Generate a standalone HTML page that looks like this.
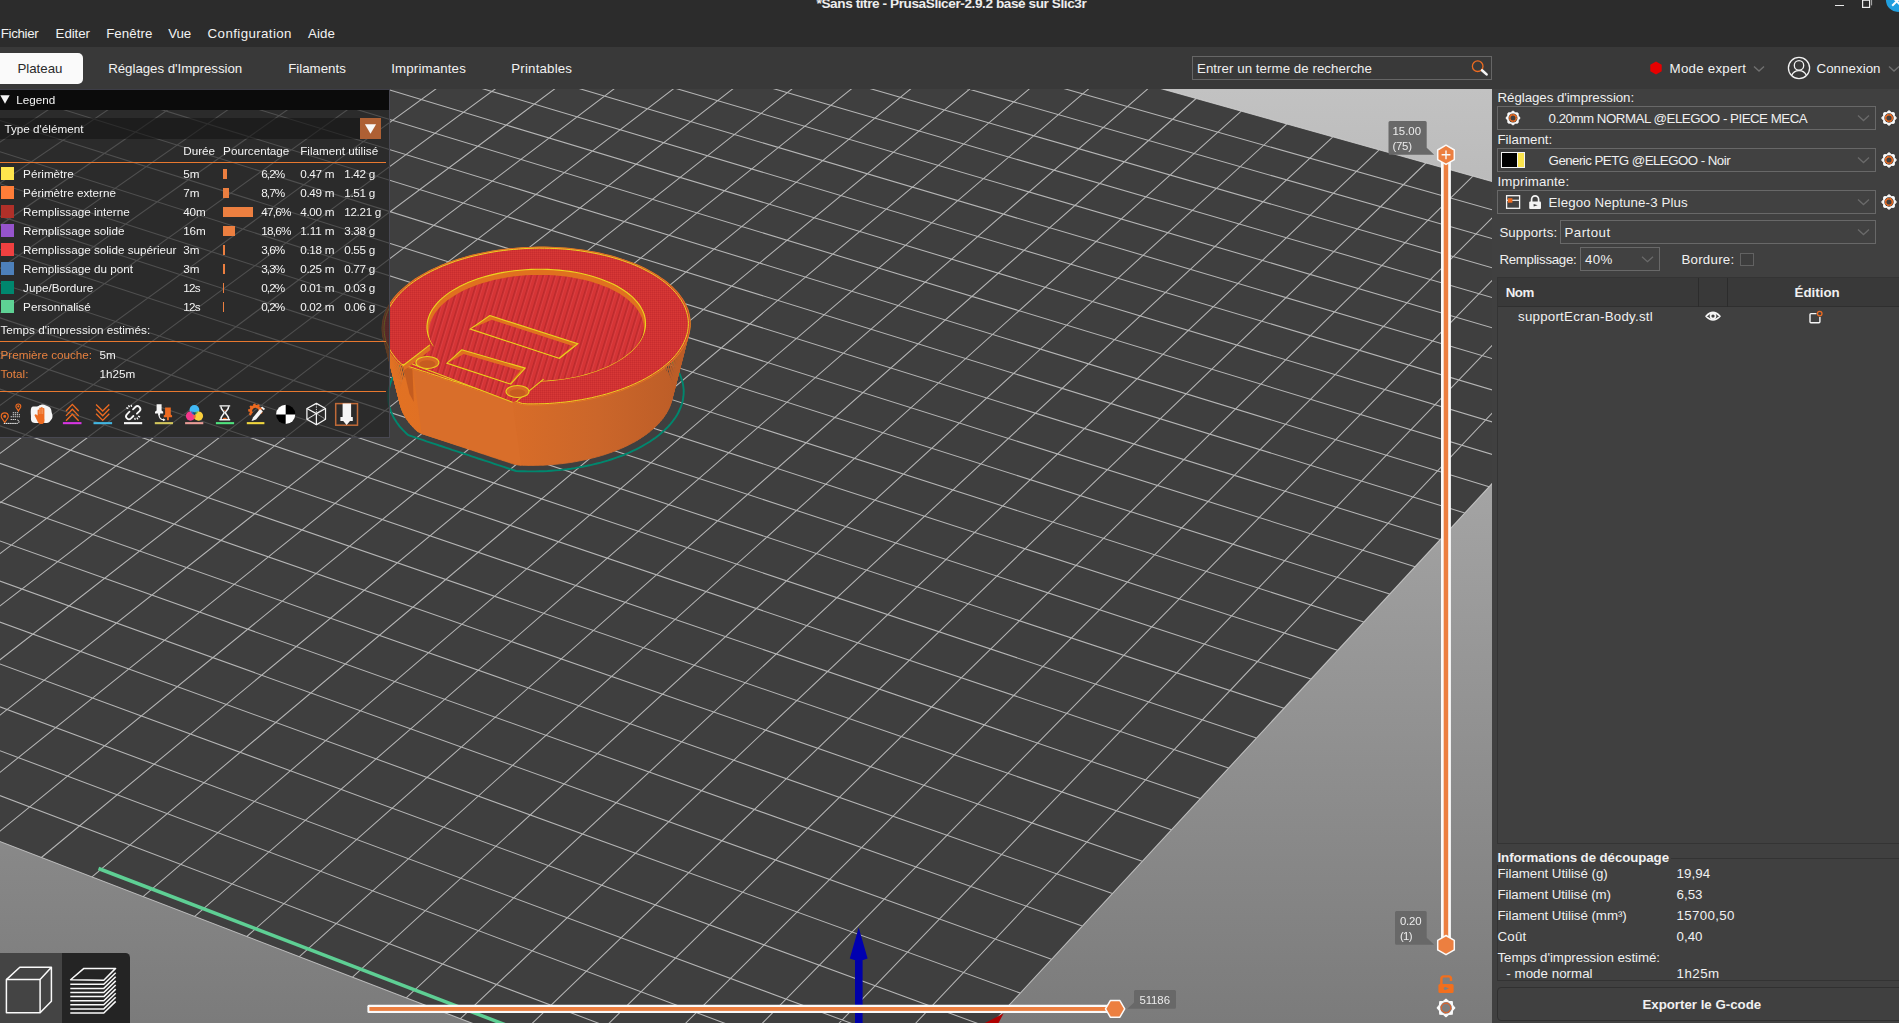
<!DOCTYPE html><html lang="fr"><head><meta charset="utf-8"><title>PrusaSlicer</title><style>
html,body{margin:0;padding:0}body{width:1899px;height:1023px;overflow:hidden;position:relative;background:#3b3b3b;font-family:"Liberation Sans","DejaVu Sans",sans-serif}
.t{position:absolute;white-space:pre;}
#gl{position:absolute;left:0;top:0;width:1492px;height:1023px;will-change:transform}
svg{overflow:visible}
</style></head><body>
<svg id="scene" width="1492" height="934" viewBox="0 89 1492 934" style="position:absolute;left:0;top:89px;overflow:hidden">
<defs><linearGradient id="bg" x1="0" y1="0" x2="0" y2="1"><stop offset="0" stop-color="#c2c2c2"/><stop offset="1" stop-color="#7b7b7b"/></linearGradient>
<linearGradient id="wall" x1="0" y1="0" x2="1" y2="0"><stop offset="0" stop-color="#e37222"/><stop offset="0.4" stop-color="#d96d28"/><stop offset="0.7" stop-color="#cb662a"/><stop offset="1" stop-color="#bb5c27"/></linearGradient>
<pattern id="hatch" width="5.6" height="6" patternUnits="userSpaceOnUse" patternTransform="rotate(17)"><rect width="5.6" height="6" fill="#d53435"/><rect width="1.7" height="6" fill="#bb2a2c"/><rect x="1.7" width="0.9" height="6" fill="#dd4245"/></pattern>
<pattern id="fine" width="2" height="2" patternUnits="userSpaceOnUse"><rect width="2" height="2" fill="#d03232"/><rect width="1" height="1" fill="#bf2a2d"/><rect x="1" y="1" width="1" height="1" fill="#dc3e3b"/></pattern>
</defs>
<rect x="0" y="89" width="1492" height="934" fill="url(#bg)"/>
<polygon points="1714,243.9 321.2,-147.2 -749.5,553.1 855.7,1170.8" fill="#3f3f3f"/>
<path d="M1714 243.9L855.7 1170.8M1714 243.9L321.2 -147.2M1665 230.2L797.4 1148.4M1692.9 266.7L294.1 -129.5M1616.4 216.5L739.8 1126.2M1671.5 289.8L266.6 -111.5M1568.2 203L682.8 1104.2M1649.8 313.2L238.8 -93.3M1520.4 189.6L626.3 1082.5M1627.8 336.9L210.7 -74.9M1472.9 176.2L570.5 1061M1605.5 361L182.2 -56.3M1425.9 163L515.2 1039.7M1582.9 385.4L153.3 -37.4M1379.2 149.9L460.4 1018.7M1560 410.2L124.1 -18.3M1332.9 136.9L406.2 997.8M1536.7 435.3L94.5 1.1M1286.9 124L352.5 977.2M1513.1 460.8L64.5 20.7M1241.3 111.2L299.4 956.7M1489.1 486.7L34.1 40.6M1196.1 98.5L246.8 936.5M1464.8 513L3.4 60.7M1151.2 85.9L194.7 916.4M1440.1 539.6L-27.8 81.1M1106.7 73.4L143.1 896.6M1415.1 566.7L-59.4 101.7M1062.5 61L92 876.9M1389.7 594.1L-91.4 122.7M1018.6 48.6L41.4 857.5M1363.8 622L-123.8 143.9M975.1 36.4L-8.7 838.2M1337.6 650.3L-156.7 165.3M931.9 24.3L-58.3 819.1M1311 679.1L-190 187.1M889 12.2L-107.5 800.2M1284 708.3L-223.7 209.2M846.5 0.3L-156.1 781.4M1256.5 737.9L-257.9 231.6M804.2 -11.6L-204.4 762.9M1228.6 768L-292.6 254.3M762.3 -23.3L-252.1 744.5M1200.3 798.6L-327.8 277.3M720.7 -35L-299.5 726.3M1171.5 829.7L-363.4 300.6M679.4 -46.6L-346.4 708.2M1142.2 861.3L-399.6 324.2M638.5 -58.1L-392.8 690.4M1112.4 893.5L-436.3 348.2M597.8 -69.5L-438.8 672.7M1082.2 926.1L-473.5 372.6M557.4 -80.9L-484.5 655.1M1051.5 959.3L-511.2 397.2M517.3 -92.1L-529.6 637.7M1020.2 993.1L-549.5 422.3M477.5 -103.3L-574.4 620.5M988.4 1027.4L-588.3 447.7M438 -114.4L-618.8 603.4M956.1 1062.3L-627.7 473.5M398.8 -125.4L-662.8 586.5M923.2 1097.9L-667.7 499.6M359.9 -136.4L-706.3 569.7M889.7 1134L-708.3 526.2M321.2 -147.2L-749.5 553.1M855.7 1170.8L-749.5 553.1" stroke="#d6d6d6" stroke-opacity="0.78" stroke-width="1.05" fill="none"/>
<line x1="98.5" y1="868.5" x2="520" y2="1030.4" stroke="#5ecf94" stroke-width="3.5"/>
<polygon points="413.8,352.9 411.7,354.6 409.7,356.3 407.7,358.1 405.9,359.8 404.1,361.6 402.4,363.5 400.8,365.3 399.3,367.2 397.9,369.1 396.6,371 395.4,372.9 394.2,374.8 393.2,376.8 392.2,378.7 391.4,380.7 390.6,382.7 390,384.7 389.5,386.7 389,388.7 388.7,390.7 388.4,392.7 388.3,394.8 388.2,396.8 388.3,398.8 388.4,400.8 388.7,402.8 389,404.9 389.5,406.9 390.1,408.9 390.7,410.8 391.5,412.8 392.4,414.8 393.3,416.7 394.4,418.7 395.6,420.6 396.8,422.5 398.2,424.4 399.6,426.3 401.2,428.1 402.8,429.9 404.6,431.7 406.4,433.5 408.4,435.2 411.3,436.2 414.3,437.2 417.3,438.2 420.4,439.2 423.4,440.2 426.5,441.3 429.7,442.3 432.8,443.3 436,444.4 439.2,445.5 442.4,446.5 445.6,447.6 448.9,448.7 452.1,449.8 455.4,450.8 458.6,451.9 461.9,453 465.2,454.1 468.5,455.2 471.7,456.3 475,457.4 478.2,458.5 481.5,459.5 484.7,460.6 488,461.7 491.2,462.7 494.3,463.8 497.5,464.9 500.7,465.9 503.8,466.9 506.9,468 509.9,469 513,470 516,471 519.9,471.2 523.8,471.3 527.8,471.4 531.7,471.4 535.7,471.4 539.6,471.3 543.6,471.2 547.5,471 551.4,470.7 555.4,470.4 559.3,470.1 563.2,469.6 567.1,469.2 570.9,468.7 574.7,468.1 578.5,467.4 582.3,466.8 586,466 589.7,465.3 593.4,464.4 597,463.5 600.6,462.6 604.1,461.6 607.6,460.6 611,459.5 614.3,458.4 617.7,457.2 620.9,456 624.1,454.8 627.2,453.5 630.3,452.1 633.3,450.7 636.2,449.3 639,447.9 641.8,446.4 644.5,444.8 647.1,443.3 649.7,441.7 652.1,440 654.5,438.4 656.8,436.7 659,435 661.1,433.2 663.2,431.4 665.1,429.6 667,427.8 668.7,426 670.4,424.1 672,422.2 673.4,420.3 674.8,418.4 676.1,416.4 677.3,414.5 678.4,412.5 679.3,410.5 680.2,408.5 681,406.5 681.7,404.5 682.3,402.5 682.8,400.5 683.1,398.5 683.4,396.5 683.6,394.5 683.7,392.4 683.7,390.4 683.5,388.4 683.3,386.4 683,384.4 682.6,382.4 682,380.4 681.4,378.5 680.7,376.5 679.9,374.5 678.9,372.6 677.9,370.7 676.8,368.8 675.6,366.9 674.3,365 672.9,363.2 671.4,361.4 669.9,359.6 668.2,357.8 666.5,356.1 664.6,354.3 662.7,352.7 660.7,351 658.6,349.4 656.4,347.7 654.2,346.2 651.9,344.6 649.5,343.1 647,341.7 644.5,340.2 641.8,338.8 639.1,337.5 636.4,336.1 633.6,334.9 630.7,333.6 627.7,332.4 624.7,331.2 621.7,330.1 618.5,329 615.4,328 612.1,327 608.9,326.1 605.5,325.2 602.2,324.3 598.8,323.5 595.3,322.7 591.8,322 588.3,321.4 584.8,320.7 581.2,320.2 577.5,319.7 573.9,319.2 570.2,318.8 566.5,318.4 562.8,318.1 559.1,317.8 555.4,317.6 551.6,317.4 547.8,317.3 544.1,317.2 540.3,317.2 536.5,317.2 532.7,317.3 528.9,317.4 525.2,317.6 521.4,317.8 517.6,318.1 513.9,318.4 510.1,318.8 506.4,319.2 502.7,319.7 499,320.2 495.4,320.8 491.8,321.4 488.2,322.1 484.6,322.8 481.1,323.6 477.6,324.4 474.1,325.3 470.7,326.2 467.3,327.1 464,328.1 460.7,329.2 457.4,330.3 454.2,331.4 451.1,332.6 448,333.8 445,335 442,336.3 439.1,337.6 436.3,339 433.5,340.4 430.8,341.9 428.1,343.3 425.6,344.8 423.1,346.4 420.6,348 418.3,349.6 416,351.2 413.8,352.9" fill="none" stroke="#00876e" stroke-width="1.9"/>
<path d="M409.1 283.7L406.2 286L420.3 357.9L422.9 355.8ZM406.2 286L403.4 288.4L417.9 360.1L420.3 357.9ZM403.4 288.4L400.8 290.8L415.6 362.3L417.9 360.1ZM400.8 290.8L398.3 293.3L413.4 364.5L415.6 362.3ZM398.3 293.3L396.1 295.8L411.4 366.8L413.4 364.5ZM396.1 295.8L393.9 298.3L409.5 369.1L411.4 366.8ZM393.9 298.3L392 300.9L407.8 371.4L409.5 369.1ZM392 300.9L390.2 303.5L406.3 373.8L407.8 371.4ZM390.2 303.5L388.6 306.1L404.8 376.2L406.3 373.8ZM388.6 306.1L387.2 308.8L403.6 378.6L404.8 376.2ZM387.2 308.8L386 311.4L402.5 381L403.6 378.6ZM386 311.4L384.9 314.1L401.6 383.5L402.5 381ZM384.9 314.1L384 316.9L400.8 385.9L401.6 383.5ZM384 316.9L383.3 319.6L400.2 388.4L400.8 385.9ZM383.3 319.6L382.8 322.3L399.7 390.9L400.2 388.4ZM382.8 322.3L382.5 325.1L399.5 393.4L399.7 390.9ZM382.5 325.1L382.3 327.8L399.3 395.9L399.5 393.4ZM382.3 327.8L382.4 330.6L399.4 398.3L399.3 395.9ZM382.4 330.6L382.6 333.3L399.6 400.8L399.4 398.3ZM382.6 333.3L383 336.1L400 403.3L399.6 400.8ZM383 336.1L383.7 338.8L400.6 405.8L400 403.3ZM383.7 338.8L384.5 341.5L401.3 408.2L400.6 405.8ZM384.5 341.5L385.4 344.2L402.2 410.7L401.3 408.2ZM385.4 344.2L386.6 346.9L403.2 413.1L402.2 410.7ZM386.6 346.9L388 349.6L404.5 415.5L403.2 413.1ZM388 349.6L389.5 352.2L405.8 417.9L404.5 415.5ZM389.5 352.2L391.3 354.8L407.4 420.2L405.8 417.9ZM391.3 354.8L393.2 357.3L409.1 422.6L407.4 420.2ZM393.2 357.3L395.3 359.9L410.9 424.8L409.1 422.6ZM395.3 359.9L397.5 362.4L413 427.1L410.9 424.8ZM397.5 362.4L400.1 364.7L415.1 429.3L413 427.1ZM400.1 364.7L404.1 366L417.5 431.5L415.1 429.3ZM404.1 366L408.2 367.4L420.5 433.1L417.5 431.5ZM408.2 367.4L412.3 368.7L424.2 434.4L420.5 433.1ZM412.3 368.7L416.5 370.1L427.9 435.6L424.2 434.4ZM416.5 370.1L420.8 371.5L431.7 436.9L427.9 435.6ZM420.8 371.5L425.1 372.9L435.5 438.1L431.7 436.9ZM425.1 372.9L429.4 374.3L439.4 439.4L435.5 438.1ZM429.4 374.3L433.8 375.7L443.3 440.7L439.4 439.4ZM433.8 375.7L438.3 377.2L447.2 442L443.3 440.7ZM438.3 377.2L442.8 378.6L451.2 443.3L447.2 442ZM442.8 378.6L447.3 380.1L455.2 444.7L451.2 443.3ZM447.3 380.1L451.8 381.6L459.2 446L455.2 444.7ZM451.8 381.6L456.3 383.1L463.2 447.3L459.2 446ZM456.3 383.1L460.8 384.5L467.3 448.7L463.2 447.3ZM460.8 384.5L465.4 386L471.3 450L467.3 448.7ZM465.4 386L469.9 387.5L475.3 451.3L471.3 450ZM469.9 387.5L474.5 389L479.3 452.7L475.3 451.3ZM474.5 389L479 390.5L483.3 454L479.3 452.7ZM479 390.5L483.5 391.9L487.3 455.3L483.3 454ZM483.5 391.9L488 393.4L491.3 456.7L487.3 455.3ZM488 393.4L492.4 394.8L495.3 458L491.3 456.7ZM492.4 394.8L496.8 396.3L499.2 459.3L495.3 458ZM496.8 396.3L501.2 397.7L503.1 460.6L499.2 459.3ZM501.2 397.7L505.5 399.1L506.9 461.8L503.1 460.6ZM505.5 399.1L509.8 400.5L510.7 463.1L506.9 461.8ZM509.8 400.5L514 401.9L514.4 464.3L510.7 463.1ZM514 401.9L518.2 403.3L518.7 465.1L514.4 464.3ZM518.2 403.3L522.3 404.6L523.5 465.3L518.7 465.1ZM522.3 404.6L527.7 404.8L528.4 465.4L523.5 465.3ZM527.7 404.8L533.2 404.8L533.3 465.4L528.4 465.4ZM533.2 404.8L538.6 404.7L538.1 465.3L533.3 465.4ZM538.6 404.7L544.1 404.6L543 465.2L538.1 465.3ZM544.1 404.6L549.6 404.3L547.8 464.9L543 465.2ZM549.6 404.3L555.1 403.9L552.7 464.6L547.8 464.9ZM555.1 403.9L560.5 403.4L557.5 464.1L552.7 464.6ZM560.5 403.4L565.9 402.8L562.3 463.6L557.5 464.1ZM565.9 402.8L571.3 402.2L567 463L562.3 463.6ZM571.3 402.2L576.6 401.4L571.8 462.3L567 463ZM576.6 401.4L581.9 400.5L576.4 461.5L571.8 462.3ZM581.9 400.5L587.1 399.6L581 460.6L576.4 461.5ZM587.1 399.6L592.2 398.5L585.6 459.7L581 460.6ZM592.2 398.5L597.3 397.4L590.1 458.6L585.6 459.7ZM597.3 397.4L602.3 396.1L594.5 457.5L590.1 458.6ZM602.3 396.1L607.2 394.8L598.9 456.3L594.5 457.5ZM607.2 394.8L612 393.4L603.1 455.1L598.9 456.3ZM612 393.4L616.7 391.9L607.3 453.7L603.1 455.1ZM616.7 391.9L621.4 390.3L611.4 452.3L607.3 453.7ZM621.4 390.3L625.9 388.6L615.4 450.8L611.4 452.3ZM625.9 388.6L630.2 386.9L619.3 449.2L615.4 450.8ZM630.2 386.9L634.5 385.1L623.1 447.6L619.3 449.2ZM634.5 385.1L638.7 383.2L626.8 445.9L623.1 447.6ZM638.7 383.2L642.7 381.2L630.3 444.1L626.8 445.9ZM642.7 381.2L646.5 379.2L633.8 442.3L630.3 444.1ZM646.5 379.2L650.3 377.1L637.1 440.4L633.8 442.3ZM650.3 377.1L653.8 375L640.3 438.4L637.1 440.4ZM653.8 375L657.3 372.7L643.3 436.4L640.3 438.4ZM657.3 372.7L660.6 370.5L646.2 434.4L643.3 436.4ZM660.6 370.5L663.7 368.1L649 432.3L646.2 434.4ZM663.7 368.1L666.6 365.8L651.6 430.1L649 432.3ZM666.6 365.8L669.4 363.3L654.1 427.9L651.6 430.1ZM669.4 363.3L672.1 360.9L656.5 425.7L654.1 427.9ZM672.1 360.9L674.5 358.3L658.7 423.4L656.5 425.7ZM674.5 358.3L676.8 355.8L660.7 421.1L658.7 423.4ZM676.8 355.8L678.9 353.2L662.6 418.8L660.7 421.1ZM678.9 353.2L680.9 350.6L664.3 416.4L662.6 418.8ZM680.9 350.6L682.6 348L665.9 414L664.3 416.4ZM682.6 348L684.2 345.3L667.3 411.6L665.9 414ZM684.2 345.3L685.6 342.6L668.5 409.2L667.3 411.6ZM685.6 342.6L686.8 339.9L669.6 406.7L668.5 409.2ZM686.8 339.9L687.8 337.2L670.5 404.3L669.6 406.7ZM687.8 337.2L688.6 334.4L671.3 401.8L670.5 404.3ZM688.6 334.4L689.3 331.7L671.8 399.3L671.3 401.8ZM689.3 331.7L689.7 328.9L672.3 396.8L671.8 399.3ZM689.7 328.9L690 326.2L672.5 394.3L672.3 396.8ZM690 326.2L690.1 323.4L672.6 391.8L672.5 394.3ZM690.1 323.4L689.9 320.7L672.5 389.3L672.6 391.8ZM689.9 320.7L689.6 318L672.3 386.9L672.5 389.3ZM689.6 318L689.2 315.2L671.8 384.4L672.3 386.9ZM689.2 315.2L688.5 312.5L671.3 382L671.8 384.4ZM688.5 312.5L687.7 309.8L670.5 379.5L671.3 382ZM687.7 309.8L686.6 307.2L669.6 377.1L670.5 379.5ZM686.6 307.2L685.4 304.5L668.6 374.7L669.6 377.1ZM685.4 304.5L684 301.9L667.3 372.3L668.6 374.7ZM684 301.9L682.5 299.3L665.9 370L667.3 372.3ZM682.5 299.3L680.7 296.8L664.4 367.7L665.9 370ZM680.7 296.8L678.8 294.3L662.7 365.4L664.4 367.7ZM678.8 294.3L676.7 291.8L660.9 363.2L662.7 365.4ZM676.7 291.8L674.5 289.4L658.9 361L660.9 363.2ZM674.5 289.4L672.1 287L656.8 358.8L658.9 361ZM672.1 287L669.5 284.7L654.5 356.7L656.8 358.8ZM669.5 284.7L666.8 282.4L652.1 354.6L654.5 356.7ZM666.8 282.4L663.9 280.1L649.5 352.6L652.1 354.6ZM663.9 280.1L660.8 278L646.8 350.6L649.5 352.6ZM660.8 278L657.7 275.9L644 348.7L646.8 350.6ZM657.7 275.9L654.4 273.8L641.1 346.8L644 348.7ZM654.4 273.8L650.9 271.8L638 345L641.1 346.8ZM650.9 271.8L647.3 269.9L634.8 343.2L638 345ZM647.3 269.9L643.6 268L631.5 341.5L634.8 343.2ZM643.6 268L639.8 266.2L628.1 339.9L631.5 341.5ZM639.8 266.2L635.8 264.5L624.6 338.4L628.1 339.9ZM635.8 264.5L631.7 262.9L621 336.9L624.6 338.4ZM631.7 262.9L627.5 261.3L617.2 335.4L621 336.9ZM627.5 261.3L623.2 259.8L613.4 334.1L617.2 335.4ZM623.2 259.8L618.8 258.4L609.5 332.8L613.4 334.1ZM618.8 258.4L614.4 257L605.5 331.6L609.5 332.8ZM614.4 257L609.8 255.8L601.5 330.4L605.5 331.6ZM609.8 255.8L605.1 254.6L597.3 329.4L601.5 330.4ZM605.1 254.6L600.4 253.5L593.1 328.4L597.3 329.4ZM600.4 253.5L595.6 252.5L588.8 327.5L593.1 328.4ZM595.6 252.5L590.7 251.6L584.5 326.6L588.8 327.5ZM590.7 251.6L585.7 250.8L580.1 325.9L584.5 326.6ZM585.7 250.8L580.7 250L575.6 325.2L580.1 325.9ZM580.7 250L575.7 249.4L571.1 324.6L575.6 325.2ZM575.7 249.4L570.6 248.8L566.6 324.1L571.1 324.6ZM570.6 248.8L565.5 248.3L562 323.6L566.6 324.1ZM565.5 248.3L560.3 247.9L557.4 323.3L562 323.6ZM560.3 247.9L555.1 247.7L552.8 323L557.4 323.3ZM555.1 247.7L549.9 247.4L548.1 322.8L552.8 323ZM549.9 247.4L544.6 247.3L543.5 322.7L548.1 322.8ZM544.6 247.3L539.4 247.3L538.8 322.7L543.5 322.7ZM539.4 247.3L534.1 247.4L534.1 322.8L538.8 322.7ZM534.1 247.4L528.9 247.6L529.5 322.9L534.1 322.8ZM528.9 247.6L523.7 247.8L524.8 323.2L529.5 322.9ZM523.7 247.8L518.4 248.2L520.1 323.5L524.8 323.2ZM518.4 248.2L513.2 248.6L515.5 323.9L520.1 323.5ZM513.2 248.6L508.1 249.1L510.9 324.4L515.5 323.9ZM508.1 249.1L502.9 249.7L506.3 324.9L510.9 324.4ZM502.9 249.7L497.8 250.4L501.8 325.6L506.3 324.9ZM497.8 250.4L492.7 251.2L497.3 326.3L501.8 325.6ZM492.7 251.2L487.7 252.1L492.8 327.1L497.3 326.3ZM487.7 252.1L482.8 253.1L488.4 328L492.8 327.1ZM482.8 253.1L477.9 254.1L484 329L488.4 328ZM477.9 254.1L473 255.3L479.7 330L484 329ZM473 255.3L468.3 256.5L475.5 331.1L479.7 330ZM468.3 256.5L463.6 257.8L471.3 332.3L475.5 331.1ZM463.6 257.8L459 259.2L467.2 333.5L471.3 332.3ZM459 259.2L454.5 260.7L463.2 334.9L467.2 333.5ZM454.5 260.7L450.1 262.2L459.3 336.3L463.2 334.9ZM450.1 262.2L445.7 263.8L455.5 337.8L459.3 336.3ZM445.7 263.8L441.5 265.5L451.7 339.3L455.5 337.8ZM441.5 265.5L437.4 267.3L448.1 340.9L451.7 339.3ZM437.4 267.3L433.4 269.1L444.5 342.6L448.1 340.9ZM433.4 269.1L429.6 271L441.1 344.3L444.5 342.6ZM429.6 271L425.8 273L437.8 346.1L441.1 344.3ZM425.8 273L422.2 275L434.6 347.9L437.8 346.1ZM422.2 275L418.7 277.1L431.5 349.8L434.6 347.9ZM418.7 277.1L415.3 279.2L428.5 351.8L431.5 349.8ZM415.3 279.2L412.1 281.5L425.6 353.8L428.5 351.8ZM412.1 281.5L409.1 283.7L422.9 355.8L425.6 353.8Z" fill="url(#wall)" stroke="url(#wall)" stroke-width="0.8"/>
<polygon points="412.2,364.1 512.5,402.2 521.3,465.8 421.6,433.9" fill="#d96e2a"/>
<polygon points="402.8,365.8 412.2,364.1 413.8,402 409.5,394" fill="#c45c1f"/>
<polygon points="409.1,283.7 406.2,286 403.4,288.4 400.8,290.8 398.3,293.3 396.1,295.8 393.9,298.3 392,300.9 390.2,303.5 388.6,306.1 387.2,308.8 386,311.4 384.9,314.1 384,316.9 383.3,319.6 382.8,322.3 382.5,325.1 382.3,327.8 382.4,330.6 382.6,333.3 383,336.1 383.7,338.8 384.5,341.5 385.4,344.2 386.6,346.9 388,349.6 389.5,352.2 391.3,354.8 393.2,357.3 395.3,359.9 397.5,362.4 400.1,364.7 404.1,366 408.2,367.4 412.3,368.7 416.5,370.1 420.8,371.5 425.1,372.9 429.4,374.3 433.8,375.7 438.3,377.2 442.8,378.6 447.3,380.1 451.8,381.6 456.3,383.1 460.8,384.5 465.4,386 469.9,387.5 474.5,389 479,390.5 483.5,391.9 488,393.4 492.4,394.8 496.8,396.3 501.2,397.7 505.5,399.1 509.8,400.5 514,401.9 518.2,403.3 522.3,404.6 527.7,404.8 533.2,404.8 538.6,404.7 544.1,404.6 549.6,404.3 555.1,403.9 560.5,403.4 565.9,402.8 571.3,402.2 576.6,401.4 581.9,400.5 587.1,399.6 592.2,398.5 597.3,397.4 602.3,396.1 607.2,394.8 612,393.4 616.7,391.9 621.4,390.3 625.9,388.6 630.2,386.9 634.5,385.1 638.7,383.2 642.7,381.2 646.5,379.2 650.3,377.1 653.8,375 657.3,372.7 660.6,370.5 663.7,368.1 666.6,365.8 669.4,363.3 672.1,360.9 674.5,358.3 676.8,355.8 678.9,353.2 680.9,350.6 682.6,348 684.2,345.3 685.6,342.6 686.8,339.9 687.8,337.2 688.6,334.4 689.3,331.7 689.7,328.9 690,326.2 690.1,323.4 689.9,320.7 689.6,318 689.2,315.2 688.5,312.5 687.7,309.8 686.6,307.2 685.4,304.5 684,301.9 682.5,299.3 680.7,296.8 678.8,294.3 676.7,291.8 674.5,289.4 672.1,287 669.5,284.7 666.8,282.4 663.9,280.1 660.8,278 657.7,275.9 654.4,273.8 650.9,271.8 647.3,269.9 643.6,268 639.8,266.2 635.8,264.5 631.7,262.9 627.5,261.3 623.2,259.8 618.8,258.4 614.4,257 609.8,255.8 605.1,254.6 600.4,253.5 595.6,252.5 590.7,251.6 585.7,250.8 580.7,250 575.7,249.4 570.6,248.8 565.5,248.3 560.3,247.9 555.1,247.7 549.9,247.4 544.6,247.3 539.4,247.3 534.1,247.4 528.9,247.6 523.7,247.8 518.4,248.2 513.2,248.6 508.1,249.1 502.9,249.7 497.8,250.4 492.7,251.2 487.7,252.1 482.8,253.1 477.9,254.1 473,255.3 468.3,256.5 463.6,257.8 459,259.2 454.5,260.7 450.1,262.2 445.7,263.8 441.5,265.5 437.4,267.3 433.4,269.1 429.6,271 425.8,273 422.2,275 418.7,277.1 415.3,279.2 412.1,281.5 409.1,283.7" fill="#d23232" stroke="#e07e22" stroke-width="1.4"/>
<polygon points="409.1,283.7 406.2,286 403.4,288.4 400.8,290.8 398.3,293.3 396.1,295.8 393.9,298.3 392,300.9 390.2,303.5 388.6,306.1 387.2,308.8 386,311.4 384.9,314.1 384,316.9 383.3,319.6 382.8,322.3 382.5,325.1 382.3,327.8 382.4,330.6 382.6,333.3 383,336.1 383.7,338.8 384.5,341.5 385.4,344.2 386.6,346.9 388,349.6 389.5,352.2 391.3,354.8 393.2,357.3 395.3,359.9 397.5,362.4 400.1,364.7 404.1,366 408.2,367.4 412.3,368.7 416.5,370.1 420.8,371.5 425.1,372.9 429.4,374.3 433.8,375.7 438.3,377.2 442.8,378.6 447.3,380.1 451.8,381.6 456.3,383.1 460.8,384.5 465.4,386 469.9,387.5 474.5,389 479,390.5 483.5,391.9 488,393.4 492.4,394.8 496.8,396.3 501.2,397.7 505.5,399.1 509.8,400.5 514,401.9 518.2,403.3 522.3,404.6 527.7,404.8 533.2,404.8 538.6,404.7 544.1,404.6 549.6,404.3 555.1,403.9 560.5,403.4 565.9,402.8 571.3,402.2 576.6,401.4 581.9,400.5 587.1,399.6 592.2,398.5 597.3,397.4 602.3,396.1 607.2,394.8 612,393.4 616.7,391.9 621.4,390.3 625.9,388.6 630.2,386.9 634.5,385.1 638.7,383.2 642.7,381.2 646.5,379.2 650.3,377.1 653.8,375 657.3,372.7 660.6,370.5 663.7,368.1 666.6,365.8 669.4,363.3 672.1,360.9 674.5,358.3 676.8,355.8 678.9,353.2 680.9,350.6 682.6,348 684.2,345.3 685.6,342.6 686.8,339.9 687.8,337.2 688.6,334.4 689.3,331.7 689.7,328.9 690,326.2 690.1,323.4 689.9,320.7 689.6,318 689.2,315.2 688.5,312.5 687.7,309.8 686.6,307.2 685.4,304.5 684,301.9 682.5,299.3 680.7,296.8 678.8,294.3 676.7,291.8 674.5,289.4 672.1,287 669.5,284.7 666.8,282.4 663.9,280.1 660.8,278 657.7,275.9 654.4,273.8 650.9,271.8 647.3,269.9 643.6,268 639.8,266.2 635.8,264.5 631.7,262.9 627.5,261.3 623.2,259.8 618.8,258.4 614.4,257 609.8,255.8 605.1,254.6 600.4,253.5 595.6,252.5 590.7,251.6 585.7,250.8 580.7,250 575.7,249.4 570.6,248.8 565.5,248.3 560.3,247.9 555.1,247.7 549.9,247.4 544.6,247.3 539.4,247.3 534.1,247.4 528.9,247.6 523.7,247.8 518.4,248.2 513.2,248.6 508.1,249.1 502.9,249.7 497.8,250.4 492.7,251.2 487.7,252.1 482.8,253.1 477.9,254.1 473,255.3 468.3,256.5 463.6,257.8 459,259.2 454.5,260.7 450.1,262.2 445.7,263.8 441.5,265.5 437.4,267.3 433.4,269.1 429.6,271 425.8,273 422.2,275 418.7,277.1 415.3,279.2 412.1,281.5 409.1,283.7" fill="url(#fine)" opacity="0.6"/>
<polygon points="410.4,284.2 407.6,286.4 404.8,288.8 402.3,291.2 399.8,293.6 397.6,296.1 395.5,298.6 393.6,301.1 391.8,303.7 390.2,306.3 388.8,308.9 387.6,311.6 386.5,314.3 385.7,316.9 385,319.6 384.5,322.4 384.2,325.1 384,327.8 384.1,330.5 384.3,333.2 384.7,335.9 385.3,338.6 386.1,341.3 387.1,344 388.3,346.6 389.6,349.3 391.1,351.9 392.9,354.4 394.7,357 396.8,359.5 399.1,361.9 401.7,364.2 405.7,365.5 409.7,366.8 413.8,368.1 417.9,369.5 422.2,370.9 426.4,372.2 430.7,373.7 435.1,375.1 439.5,376.5 443.9,378 448.4,379.4 452.8,380.9 457.3,382.3 461.8,383.8 466.3,385.3 470.8,386.7 475.3,388.2 479.7,389.6 484.2,391.1 488.6,392.5 493,394 497.4,395.4 501.7,396.8 506,398.2 510.2,399.6 514.4,400.9 518.5,402.3 522.6,403.6 527.8,403.9 533.2,403.9 538.6,403.8 544.1,403.7 549.5,403.4 554.9,403 560.3,402.5 565.6,402 570.9,401.3 576.2,400.5 581.4,399.7 586.5,398.7 591.6,397.7 596.6,396.5 601.6,395.3 606.4,394 611.2,392.6 615.9,391.1 620.4,389.6 624.9,387.9 629.2,386.2 633.4,384.4 637.5,382.5 641.5,380.6 645.3,378.6 649,376.5 652.5,374.4 655.9,372.2 659.2,370 662.3,367.7 665.2,365.3 668,362.9 670.6,360.5 673,358 675.3,355.5 677.4,352.9 679.3,350.3 681,347.7 682.6,345.1 683.9,342.4 685.1,339.7 686.1,337 686.9,334.3 687.6,331.6 688,328.9 688.3,326.2 688.4,323.4 688.3,320.7 688,318 687.5,315.3 686.8,312.7 686,310 685,307.4 683.8,304.7 682.4,302.2 680.9,299.6 679.1,297.1 677.3,294.6 675.2,292.2 673,289.8 670.6,287.4 668,285.1 665.4,282.8 662.5,280.6 659.5,278.5 656.4,276.4 653.1,274.3 649.7,272.4 646.1,270.5 642.4,268.6 638.6,266.8 634.7,265.1 630.7,263.5 626.5,262 622.3,260.5 618,259.1 613.5,257.8 609,256.5 604.4,255.4 599.7,254.3 594.9,253.3 590.1,252.4 585.2,251.6 580.3,250.8 575.3,250.2 570.2,249.6 565.1,249.1 560,248.8 554.9,248.5 549.7,248.3 544.5,248.2 539.4,248.1 534.2,248.2 529,248.4 523.8,248.6 518.6,249 513.5,249.4 508.4,249.9 503.3,250.5 498.2,251.2 493.2,252 488.2,252.9 483.3,253.9 478.5,254.9 473.7,256 469,257.2 464.4,258.5 459.8,259.9 455.3,261.3 451,262.9 446.7,264.5 442.5,266.1 438.5,267.9 434.5,269.7 430.7,271.6 427,273.5 423.4,275.5 420,277.6 416.7,279.7 413.5,281.9 410.4,284.2" fill="none" stroke="#ecd41f" stroke-width="1"/>
<clipPath id="rimclip"><polygon points="445.6,295.4 442.6,297.9 439.8,300.4 437.2,303.1 435,305.8 433,308.5 431.3,311.3 429.8,314.2 428.7,317.1 427.8,320 427.3,322.9 427,325.8 427,328.7 427.4,331.7 428,334.6 429,337.5 430.2,340.3 431.7,343.1 433.6,345.9 435.7,348.6 438.1,351.2 440.7,353.8 443.7,356.3 446.8,358.7 450.3,361 454,363.3 457.9,365.4 462.1,367.4 466.4,369.3 471,371 475.7,372.7 480.6,374.2 485.7,375.5 490.9,376.8 496.3,377.8 501.7,378.8 507.3,379.5 512.9,380.2 518.7,380.6 524.4,380.9 530.2,381.1 536,381.1 541.8,380.9 547.6,380.6 553.4,380.1 559.1,379.5 564.8,378.7 570.3,377.8 575.8,376.7 581.2,375.4 586.4,374.1 591.5,372.6 596.4,370.9 601.2,369.1 605.7,367.2 610.1,365.2 614.3,363.1 618.2,360.9 621.9,358.6 625.4,356.1 628.6,353.6 631.5,351.1 634.2,348.4 636.6,345.7 638.8,342.9 640.6,340.1 642.2,337.3 643.5,334.4 644.4,331.5 645.1,328.6 645.5,325.6 645.5,322.7 645.3,319.8 644.8,316.9 644,314 642.9,311.2 641.5,308.4 639.8,305.6 637.8,302.9 635.6,300.3 633.1,297.7 630.3,295.2 627.3,292.8 624,290.5 620.5,288.3 616.8,286.1 612.9,284.1 608.8,282.2 604.4,280.4 599.9,278.7 595.3,277.2 590.5,275.8 585.5,274.5 580.4,273.3 575.2,272.3 569.9,271.4 564.5,270.7 559,270.1 553.5,269.7 547.9,269.4 542.3,269.3 536.6,269.3 531,269.4 525.4,269.7 519.8,270.2 514.3,270.8 508.8,271.5 503.4,272.4 498,273.4 492.8,274.6 487.7,275.9 482.7,277.3 477.9,278.8 473.2,280.5 468.6,282.3 464.3,284.2 460.1,286.3 456.2,288.4 452.4,290.6 448.9,292.9 445.6,295.4"/></clipPath>
<polygon points="445.6,295.4 442.6,297.9 439.8,300.4 437.2,303.1 435,305.8 433,308.5 431.3,311.3 429.8,314.2 428.7,317.1 427.8,320 427.3,322.9 427,325.8 427,328.7 427.4,331.7 428,334.6 429,337.5 430.2,340.3 431.7,343.1 433.6,345.9 435.7,348.6 438.1,351.2 440.7,353.8 443.7,356.3 446.8,358.7 450.3,361 454,363.3 457.9,365.4 462.1,367.4 466.4,369.3 471,371 475.7,372.7 480.6,374.2 485.7,375.5 490.9,376.8 496.3,377.8 501.7,378.8 507.3,379.5 512.9,380.2 518.7,380.6 524.4,380.9 530.2,381.1 536,381.1 541.8,380.9 547.6,380.6 553.4,380.1 559.1,379.5 564.8,378.7 570.3,377.8 575.8,376.7 581.2,375.4 586.4,374.1 591.5,372.6 596.4,370.9 601.2,369.1 605.7,367.2 610.1,365.2 614.3,363.1 618.2,360.9 621.9,358.6 625.4,356.1 628.6,353.6 631.5,351.1 634.2,348.4 636.6,345.7 638.8,342.9 640.6,340.1 642.2,337.3 643.5,334.4 644.4,331.5 645.1,328.6 645.5,325.6 645.5,322.7 645.3,319.8 644.8,316.9 644,314 642.9,311.2 641.5,308.4 639.8,305.6 637.8,302.9 635.6,300.3 633.1,297.7 630.3,295.2 627.3,292.8 624,290.5 620.5,288.3 616.8,286.1 612.9,284.1 608.8,282.2 604.4,280.4 599.9,278.7 595.3,277.2 590.5,275.8 585.5,274.5 580.4,273.3 575.2,272.3 569.9,271.4 564.5,270.7 559,270.1 553.5,269.7 547.9,269.4 542.3,269.3 536.6,269.3 531,269.4 525.4,269.7 519.8,270.2 514.3,270.8 508.8,271.5 503.4,272.4 498,273.4 492.8,274.6 487.7,275.9 482.7,277.3 477.9,278.8 473.2,280.5 468.6,282.3 464.3,284.2 460.1,286.3 456.2,288.4 452.4,290.6 448.9,292.9 445.6,295.4" fill="#e0701f" stroke="#ecd41f" stroke-width="1.1"/>
<g clip-path="url(#rimclip)"><polygon points="447.1,300.6 444.1,303.1 441.4,305.6 438.9,308.2 436.7,310.9 434.7,313.6 433,316.4 431.6,319.2 430.5,322 429.6,324.9 429.1,327.7 428.8,330.6 428.9,333.5 429.2,336.4 429.8,339.3 430.8,342.1 432,344.9 433.5,347.7 435.3,350.4 437.4,353.1 439.7,355.7 442.3,358.2 445.2,360.7 448.4,363.1 451.8,365.3 455.4,367.5 459.3,369.6 463.3,371.6 467.6,373.4 472.1,375.2 476.8,376.8 481.6,378.3 486.6,379.6 491.7,380.8 497,381.9 502.4,382.8 507.8,383.6 513.4,384.2 519,384.6 524.7,384.9 530.4,385.1 536.1,385.1 541.8,384.9 547.5,384.6 553.2,384.1 558.8,383.5 564.4,382.7 569.9,381.8 575.3,380.7 580.5,379.5 585.7,378.2 590.7,376.7 595.5,375.1 600.2,373.3 604.7,371.4 609,369.5 613.1,367.4 617,365.2 620.6,362.9 624,360.5 627.2,358 630.1,355.5 632.7,352.9 635.1,350.2 637.2,347.5 639,344.7 640.6,341.9 641.8,339.1 642.8,336.2 643.4,333.3 643.8,330.4 643.9,327.5 643.7,324.7 643.1,321.8 642.3,319 641.2,316.2 639.9,313.4 638.2,310.7 636.3,308 634.1,305.4 631.6,302.9 628.9,300.5 625.9,298.1 622.7,295.8 619.3,293.6 615.6,291.5 611.8,289.5 607.7,287.6 603.5,285.9 599,284.2 594.4,282.7 589.7,281.3 584.8,280 579.8,278.9 574.7,277.9 569.4,277 564.1,276.3 558.7,275.7 553.3,275.3 547.8,275 542.3,274.9 536.7,274.9 531.2,275 525.7,275.3 520.2,275.8 514.7,276.3 509.3,277.1 504,277.9 498.7,279 493.6,280.1 488.5,281.4 483.6,282.8 478.9,284.3 474.2,286 469.8,287.7 465.5,289.6 461.4,291.6 457.5,293.7 453.8,295.9 450.4,298.2 447.1,300.6" fill="url(#hatch)"/></g>
<polygon points="429.9,344.9 402.8,365.8 412.2,364.1 512.5,402.2 516.7,401.1 543.6,379.1 500,372 450,352" fill="url(#hatch)"/>
<polygon points="429.9,344.9 403.2,365.5 404.2,370.2 430.4,350" fill="#dd6f22"/>
<path d="M429.9 344.9L402.8 365.8M543.6 379.1L516.7 401.1M412.2 364.1L512.5 402.2" stroke="#e9d21e" stroke-width="1.1" fill="none"/>
<polygon points="489.8,315.6 577.8,343.7 559.4,358.3 470.2,329" fill="#e0701f" stroke="#e9d21e" stroke-width="1.1"/>
<polygon points="491.8,319.8 572.8,346.1 558.6,357.5 471.4,328.6" fill="url(#hatch)"/>
<polygon points="461.7,349.8 525.2,368.1 510.6,384 447,363.2" fill="#e0701f" stroke="#e9d21e" stroke-width="1.1"/>
<polygon points="463.7,354 520.2,370.5 509.8,383.2 448.2,362.8" fill="url(#hatch)"/>
<ellipse cx="427.4" cy="362.5" rx="11.5" ry="6" fill="#d96a25" stroke="#e9d21e" stroke-width="1.1"/>
<ellipse cx="427.4" cy="364.0" rx="8" ry="3.8" fill="#c75c20"/>
<ellipse cx="517.5" cy="391.5" rx="11.5" ry="6" fill="#d96a25" stroke="#e9d21e" stroke-width="1.1"/>
<ellipse cx="517.5" cy="393.0" rx="8" ry="3.8" fill="#c75c20"/>
<rect x="855" y="955" width="7.6" height="70" fill="#0000a8"/>
<path d="M858.7 927.5 L867.6 958.5 Q858.7 962.5 849.8 958.5 Z" fill="#0000b0"/>
<path d="M1003.5 1013.5 L983 1024 L998 1024 Z" fill="#b00000"/>
</svg>
<div id="gl">
<div style="position:absolute;left:0;top:89px;width:390px;height:349px;background:rgba(35,35,35,0.7);box-sizing:border-box;border-top:1px solid #3d3d47;border-right:1px solid #484852;border-bottom:1px solid #484852"></div>
<div style="position:absolute;left:0;top:90px;width:389px;height:20px;background:#0b0b0b"></div>
<svg style="position:absolute;left:0;top:94px" width="11" height="11" viewBox="0 0 11 11"><polygon points="0.3,1.2 9.7,1.2 5,9.8" fill="#f4f4f4"/></svg>
<span class="t" style="left:16.3px;top:93.2px;line-height:14px;font-size:11.7px;color:#f4f4f4;">Legend</span>
<div style="position:absolute;left:0;top:118px;width:381px;height:21px;background:rgba(18,18,18,0.55)"></div>
<div style="position:absolute;left:360px;top:118px;width:21px;height:21px;background:#ae6034"></div>
<svg style="position:absolute;left:360px;top:118px" width="21" height="21" viewBox="0 0 21 21"><polygon points="4.9,6.3 16.1,6.3 10.5,15.8" fill="#f8f8f8"/></svg>
<span class="t" style="left:4.5px;top:122.2px;line-height:14px;font-size:11.7px;color:#f4f4f4;">Type d'élément</span>
<span class="t" style="left:183.2px;top:144px;line-height:14px;font-size:11.7px;color:#f4f4f4;">Durée</span>
<span class="t" style="left:223.1px;top:144px;line-height:14px;font-size:11.7px;color:#f4f4f4;">Pourcentage</span>
<span class="t" style="left:300.2px;top:144px;line-height:14px;font-size:11.7px;color:#f4f4f4;">Filament utilisé</span>
<div style="position:absolute;left:0;top:161.6px;width:385.5px;height:1px;background:#e8782f"></div>
<div style="position:absolute;left:1px;top:167px;width:13px;height:13px;background:#ffe64d"></div>
<span class="t" style="left:23.1px;top:167.2px;line-height:14px;font-size:11.7px;color:#f4f4f4;">Périmètre</span>
<span class="t" style="left:183.2px;top:167.2px;line-height:14px;font-size:11.7px;color:#f4f4f4;letter-spacing:0.047px;">5m</span>
<div style="position:absolute;left:223.1px;top:168.8px;width:3.9px;height:10.4px;background:#ec7f40"></div>
<span class="t" style="left:261.2px;top:167.2px;line-height:14px;font-size:11.7px;color:#f4f4f4;letter-spacing:-0.856px;">6,2%</span>
<span class="t" style="left:300.2px;top:167.2px;line-height:14px;font-size:11.7px;color:#f4f4f4;letter-spacing:-0.294px;">0.47 m</span>
<span class="t" style="left:344.2px;top:167.2px;line-height:14px;font-size:11.7px;color:#f4f4f4;letter-spacing:-0.286px;">1.42 g</span>
<div style="position:absolute;left:1px;top:186px;width:13px;height:13px;background:#ff7d38"></div>
<span class="t" style="left:23.1px;top:186.2px;line-height:14px;font-size:11.7px;color:#f4f4f4;">Périmètre externe</span>
<span class="t" style="left:183.2px;top:186.2px;line-height:14px;font-size:11.7px;color:#f4f4f4;letter-spacing:0.047px;">7m</span>
<div style="position:absolute;left:223.1px;top:187.8px;width:5.5px;height:10.4px;background:#ec7f40"></div>
<span class="t" style="left:261.2px;top:186.2px;line-height:14px;font-size:11.7px;color:#f4f4f4;letter-spacing:-0.856px;">8,7%</span>
<span class="t" style="left:300.2px;top:186.2px;line-height:14px;font-size:11.7px;color:#f4f4f4;letter-spacing:-0.294px;">0.49 m</span>
<span class="t" style="left:344.2px;top:186.2px;line-height:14px;font-size:11.7px;color:#f4f4f4;letter-spacing:-0.286px;">1.51 g</span>
<div style="position:absolute;left:1px;top:205.1px;width:13px;height:13px;background:#b03029"></div>
<span class="t" style="left:23.1px;top:205.3px;line-height:14px;font-size:11.7px;color:#f4f4f4;">Remplissage interne</span>
<span class="t" style="left:183.2px;top:205.3px;line-height:14px;font-size:11.7px;color:#f4f4f4;letter-spacing:-0.13px;">40m</span>
<div style="position:absolute;left:223.1px;top:206.9px;width:30.2px;height:10.4px;background:#ec7f40"></div>
<span class="t" style="left:261.2px;top:205.3px;line-height:14px;font-size:11.7px;color:#f4f4f4;letter-spacing:-0.744px;">47,6%</span>
<span class="t" style="left:300.2px;top:205.3px;line-height:14px;font-size:11.7px;color:#f4f4f4;letter-spacing:-0.294px;">4.00 m</span>
<span class="t" style="left:344.2px;top:205.3px;line-height:14px;font-size:11.7px;color:#f4f4f4;letter-spacing:-0.306px;">12.21 g</span>
<div style="position:absolute;left:1px;top:224.1px;width:13px;height:13px;background:#9654cc"></div>
<span class="t" style="left:23.1px;top:224.3px;line-height:14px;font-size:11.7px;color:#f4f4f4;">Remplissage solide</span>
<span class="t" style="left:183.2px;top:224.3px;line-height:14px;font-size:11.7px;color:#f4f4f4;letter-spacing:-0.13px;">16m</span>
<div style="position:absolute;left:223.1px;top:225.9px;width:11.8px;height:10.4px;background:#ec7f40"></div>
<span class="t" style="left:261.2px;top:224.3px;line-height:14px;font-size:11.7px;color:#f4f4f4;letter-spacing:-0.744px;">18,6%</span>
<span class="t" style="left:300.2px;top:224.3px;line-height:14px;font-size:11.7px;color:#f4f4f4;letter-spacing:-0.12px;">1.11 m</span>
<span class="t" style="left:344.2px;top:224.3px;line-height:14px;font-size:11.7px;color:#f4f4f4;letter-spacing:-0.286px;">3.38 g</span>
<div style="position:absolute;left:1px;top:243.1px;width:13px;height:13px;background:#f04040"></div>
<span class="t" style="left:23.1px;top:243.3px;line-height:14px;font-size:11.7px;color:#f4f4f4;">Remplissage solide supérieur</span>
<span class="t" style="left:183.2px;top:243.3px;line-height:14px;font-size:11.7px;color:#f4f4f4;letter-spacing:0.047px;">3m</span>
<div style="position:absolute;left:223.1px;top:244.9px;width:2.3px;height:10.4px;background:#ec7f40"></div>
<span class="t" style="left:261.2px;top:243.3px;line-height:14px;font-size:11.7px;color:#f4f4f4;letter-spacing:-0.856px;">3,6%</span>
<span class="t" style="left:300.2px;top:243.3px;line-height:14px;font-size:11.7px;color:#f4f4f4;letter-spacing:-0.294px;">0.18 m</span>
<span class="t" style="left:344.2px;top:243.3px;line-height:14px;font-size:11.7px;color:#f4f4f4;letter-spacing:-0.286px;">0.55 g</span>
<div style="position:absolute;left:1px;top:262.2px;width:13px;height:13px;background:#4d80ba"></div>
<span class="t" style="left:23.1px;top:262.4px;line-height:14px;font-size:11.7px;color:#f4f4f4;">Remplissage du pont</span>
<span class="t" style="left:183.2px;top:262.4px;line-height:14px;font-size:11.7px;color:#f4f4f4;letter-spacing:0.047px;">3m</span>
<div style="position:absolute;left:223.1px;top:264px;width:2.1px;height:10.4px;background:#ec7f40"></div>
<span class="t" style="left:261.2px;top:262.4px;line-height:14px;font-size:11.7px;color:#f4f4f4;letter-spacing:-0.856px;">3,3%</span>
<span class="t" style="left:300.2px;top:262.4px;line-height:14px;font-size:11.7px;color:#f4f4f4;letter-spacing:-0.294px;">0.25 m</span>
<span class="t" style="left:344.2px;top:262.4px;line-height:14px;font-size:11.7px;color:#f4f4f4;letter-spacing:-0.286px;">0.77 g</span>
<div style="position:absolute;left:1px;top:281.2px;width:13px;height:13px;background:#00876e"></div>
<span class="t" style="left:23.1px;top:281.4px;line-height:14px;font-size:11.7px;color:#f4f4f4;">Jupe/Bordure</span>
<span class="t" style="left:183.2px;top:281.4px;line-height:14px;font-size:11.7px;color:#f4f4f4;letter-spacing:-0.682px;">12s</span>
<div style="position:absolute;left:223.1px;top:283px;width:0.9px;height:10.4px;background:#ec7f40"></div>
<span class="t" style="left:261.2px;top:281.4px;line-height:14px;font-size:11.7px;color:#f4f4f4;letter-spacing:-0.856px;">0,2%</span>
<span class="t" style="left:300.2px;top:281.4px;line-height:14px;font-size:11.7px;color:#f4f4f4;letter-spacing:-0.294px;">0.01 m</span>
<span class="t" style="left:344.2px;top:281.4px;line-height:14px;font-size:11.7px;color:#f4f4f4;letter-spacing:-0.286px;">0.03 g</span>
<div style="position:absolute;left:1px;top:300.2px;width:13px;height:13px;background:#5ed194"></div>
<span class="t" style="left:23.1px;top:300.4px;line-height:14px;font-size:11.7px;color:#f4f4f4;">Personnalisé</span>
<span class="t" style="left:183.2px;top:300.4px;line-height:14px;font-size:11.7px;color:#f4f4f4;letter-spacing:-0.682px;">12s</span>
<div style="position:absolute;left:223.1px;top:302px;width:0.9px;height:10.4px;background:#ec7f40"></div>
<span class="t" style="left:261.2px;top:300.4px;line-height:14px;font-size:11.7px;color:#f4f4f4;letter-spacing:-0.856px;">0,2%</span>
<span class="t" style="left:300.2px;top:300.4px;line-height:14px;font-size:11.7px;color:#f4f4f4;letter-spacing:-0.294px;">0.02 m</span>
<span class="t" style="left:344.2px;top:300.4px;line-height:14px;font-size:11.7px;color:#f4f4f4;letter-spacing:-0.286px;">0.06 g</span>
<span class="t" style="left:0.5px;top:323.1px;line-height:14px;font-size:11.7px;color:#f4f4f4;">Temps d'impression estimés:</span>
<div style="position:absolute;left:0;top:341.2px;width:386px;height:1px;background:#e8782f"></div>
<span class="t" style="left:0.5px;top:348.2px;line-height:14px;font-size:11.7px;color:#e8813f;">Première couche:</span>
<span class="t" style="left:99.4px;top:348.2px;line-height:14px;font-size:11.7px;color:#f4f4f4;">5m</span>
<span class="t" style="left:0.5px;top:367.1px;line-height:14px;font-size:11.7px;color:#e8813f;">Total:</span>
<span class="t" style="left:99.4px;top:367.1px;line-height:14px;font-size:11.7px;color:#f4f4f4;">1h25m</span>
<div style="position:absolute;left:0;top:391.1px;width:386px;height:1px;background:#e8782f"></div>
<svg style="position:absolute;left:0;top:395px" width="390" height="42" viewBox="0 395 390 42">
<g fill="none" stroke="#ed6b21" stroke-width="1.1"><path d="M4.75 422.6C3.2 419.4 1.2 418.3 1.2 416.4a3.55 3.55 0 0 1 7.1 0C8.3 418.3 6.3 419.4 4.75 422.6Z"/><circle cx="4.75" cy="416.4" r="0.9" fill="#ed6b21"/><path d="M18.35 411C17.3 408.6 15.9 407.9 15.9 406.4a2.45 2.45 0 0 1 4.9 0C20.8 407.9 19.4 408.6 18.35 411Z"/><circle cx="18.35" cy="406.4" r="0.55" fill="#ed6b21"/></g>
<g fill="none" stroke="#f6f6f6" stroke-width="1.1" stroke-dasharray="1.1 0.9"><path d="M12.8 412.7H19M12.8 414.7H20.6M10.7 416.8H20.6M10.7 419.5H16.4"/></g>
<path d="M3.8 423.4H17.3a1.7 1.7 0 0 0 0 -3.4" fill="none" stroke="#f6f6f6" stroke-width="1" stroke-dasharray="1.6 0.5"/>
<path d="M32.2 406.8C34.5 406.2 36.5 407 38.5 406C40.5 404.4 43.5 404 45.5 405.2C47 406.2 48.5 406 50 407.5C51.8 409.5 51.2 411.5 52 413.5C53 416 52.6 418.5 51 420C49.5 421.3 49.8 422.4 48 422.8C45 423.3 42 422.6 39.5 422.9C36.5 423.2 33.5 423.4 31.8 421.8C30.4 420 31.2 417.5 30.9 415C30.7 412 30.5 408 32.2 406.8Z" fill="#f6f6f6"/>
<path d="M37.6 415.5V410.4a0.85 0.85 0 0 1 1.7 0V408.3a0.85 0.85 0 0 1 1.7 0V407.9a0.85 0.85 0 0 1 1.7 0V408.8a0.85 0.85 0 0 1 1.7 0V418.5C44.9 421.5 44 424 41.8 424H40.6C38.9 424 38 422.6 37.1 420.6L34.6 415.6a1 1 0 0 1 1.7 -1Z" fill="#ed6b21"/><path d="M39.3 410.4V414M41 408.3V414M42.7 408.8V414" stroke="#f9c9a8" stroke-width="0.45" fill="none"/>
<path d="M66 411L72.35 404.4L78.7 411M66 415.9L72.35 409.3L78.7 415.9M66 420.8L72.35 414.2L78.7 420.8" fill="none" stroke="#ed6b21" stroke-width="1.35"/><rect x="62.9" y="422.1" width="18.6" height="2.1" fill="#d736e2"/>
<path d="M96.1 404.4L102.7 411L109.3 404.4M96.1 409.1L102.7 415.7L109.3 409.1M96.1 413.8L102.7 420.4L109.3 413.8" fill="none" stroke="#ed6b21" stroke-width="1.35"/><rect x="93.5" y="422.1" width="18.6" height="2.1" fill="#42b6e2"/>
<g fill="none" stroke="#f6f6f6" stroke-width="1.8" stroke-linecap="round"><path d="M133 409.4L135.4 407a2.9 2.9 0 0 1 4.1 4.1L136.9 413.7"/><path d="M133.4 416L131 418.4a2.9 2.9 0 0 1 -4.1 -4.1L129.5 411.7"/></g>
<path d="M126.3 407.6L128.3 408.6M128.4 405.4L129.6 407.2M131.2 404.9L131.6 406.9M140.1 417.2L138.1 416.2M138 419.4L136.8 417.6M135.2 419.9L134.8 417.9" stroke="#f6f6f6" stroke-width="1.3" fill="none"/><rect x="124" y="422.1" width="18.2" height="2.1" fill="#f6f6f6"/>
<path d="M156.6 404.3H161.6V410.4L163.2 411.8V413.5H160.1V415.6H158.1V413.5H155V411.8L156.6 410.4Z" fill="#f6f6f6"/><path d="M159.1 415.2C159.2 418 161 419.6 164.2 419.8" fill="none" stroke="#f6f6f6" stroke-width="1.2"/><path d="M163.2 418.3L165.6 419.9L163 421.3Z" fill="#f6f6f6"/>
<path d="M165.1 407.5H170.8V414.6L172.1 415.6V417.2H168.9V420.2H167V417.2H163.8V415.6L165.1 414.6Z" fill="#ed6b21"/><rect x="154.8" y="422.1" width="18.2" height="2.1" fill="#d2c65c"/>
<circle cx="194.4" cy="410" r="4.9" fill="#41b9f5"/><circle cx="190.5" cy="416.1" r="4.6" fill="#f5388c"/><circle cx="198.5" cy="416.1" r="4.6" fill="#fbcf3c"/>
<path d="M194.5 412.9a4.6 4.6 0 0 1 0 6.4a4.6 4.6 0 0 1 0 -6.4Z" fill="#f0683e"/><path d="M190.8 411.5a4.6 4.6 0 0 0 3.7 3.4a4.9 4.9 0 0 0 0 -3Z" fill="#2f6fc0"/><path d="M198.2 411.5a4.6 4.6 0 0 1 -3.7 3.4a4.9 4.9 0 0 1 0 -3Z" fill="#6db850"/><path d="M192.8 412.6H196.2L194.5 415.2Z" fill="#1d3a6a"/>
<rect x="185.1" y="422.1" width="18.2" height="2.1" fill="#e89c96"/>
<path d="M219.4 405.9H230.2M219.4 419.7H230.2" fill="none" stroke="#f6f6f6" stroke-width="1.4"/><path d="M220.9 406.3C220.9 410.2 224.1 411 224.1 412.8S220.9 415.4 220.9 419.3M228.7 406.3C228.7 410.2 225.5 411 225.5 412.8S228.7 415.4 228.7 419.3" fill="none" stroke="#f6f6f6" stroke-width="1.5"/><path d="M222.6 418.9C223.2 417.3 226.4 417.3 227 418.9Z" fill="#ed6b21"/><path d="M223.8 410.4H225.8" stroke="#c9653a" stroke-width="0.8"/><rect x="215.9" y="422.1" width="18.2" height="2.1" fill="#4fe27e"/>
<path d="M259.37 413.01A4.5 4.5 0 1 0 251.85 413.67" fill="none" stroke="#ed6b21" stroke-width="2.7"/><path d="M260.42 412.25L262.35 412.76M260.19 408.87L262.03 408.09M257.92 406.35L258.89 404.60M254.59 405.76L254.27 403.79M251.60 407.35L250.13 405.99M250.22 410.45L248.23 410.27M251.04 413.73L249.36 414.82" fill="none" stroke="#ed6b21" stroke-width="2.3"/>
<path d="M253.2 417.2L260 408.9L262.9 411.3L256.1 419.6L251.5 420.9Z" fill="#f6f6f6"/><path d="M260.9 407.8L262.1 406.4L265 408.8L263.8 410.2Z" fill="#f6f6f6"/><rect x="246.8" y="422.1" width="17.6" height="2.1" fill="#f0d63e"/>
<circle cx="285.7" cy="414.4" r="9.6" fill="#000"/><path d="M285.7 414.4V404.8A9.6 9.6 0 0 0 276.1 414.4Z" fill="#fff"/><path d="M285.7 414.4V424A9.6 9.6 0 0 0 295.3 414.4Z" fill="#fff"/>
<g fill="none" stroke="#f6f6f6" stroke-width="1.25" stroke-linejoin="round"><path d="M316.4 403.4L325.5 408.5V419.2L316.4 424.8L306.9 419.2V408.5Z"/><path d="M306.9 408.5L316.4 413.6L325.5 408.5M316.4 413.6V424.8"/><path d="M316.4 413.6L306.9 419.2" stroke-width="0.9"/><path d="M316.4 404V413.6M316.4 413.6L325.5 419.2" stroke-dasharray="1.3 1.1" stroke-width="0.9"/></g>
<rect x="335.7" y="403.6" width="21.8" height="21.6" fill="none" stroke="#c06a38" stroke-width="1.5"/><path d="M342.6 403.6H351.1V417.1H352.8V421.1H350L346.6 425L343.2 421.1H340.4V417.1H342.6Z" fill="#f6f6f6"/>
</svg>
<svg style="position:absolute;left:0;top:89px;overflow:hidden" width="1492" height="934" viewBox="0 89 1492 934">
<rect x="-2" y="953" width="64" height="72" fill="#444444"/>
<path d="M62 953H125.5a4.5 4.5 0 0 1 4.5 4.5V1025H62Z" fill="#242424"/>
<g fill="none" stroke="#fafafa" stroke-width="1.5" stroke-linejoin="round"><rect x="6.4" y="979.6" width="33.7" height="33.1"/><path d="M6.4 979.6L19.8 967.3H51.4V1001.2L40.1 1012.7M40.1 979.6L51.4 967.3"/></g>
<path d="M70.6 979.8L83.9 968.4H115.6L103.8 980.2Z" fill="none" stroke="#fafafa" stroke-width="1.5" stroke-linejoin="round"/>
<path d="M70.3 984.3H103.8L115.7 972.7M70.3 988.4H103.8L115.7 976.8M70.3 992.5H103.8L115.7 980.9M70.3 996.6H103.8L115.7 985M70.3 1000.7H103.8L115.7 989.1M70.3 1004.8H103.8L115.7 993.2M70.3 1008.9H103.8L115.7 997.3M70.3 1013H103.8L115.7 1001.4" fill="none" stroke="#fafafa" stroke-width="1.5" stroke-linejoin="round"/>
<rect x="1441" y="155" width="9.9" height="790" fill="#fafafa"/>
<rect x="1443.7" y="155" width="4.5" height="790" fill="#ec7f40"/>
<polygon points="1446,145.2 1437.7,150 1437.7,159.6 1446,164.4 1454.3,159.6 1454.3,150" fill="#ec7f40" stroke="#fafafa" stroke-width="1.5" stroke-linejoin="round"/>
<polygon points="1446,935.5 1437.7,940.3 1437.7,949.9 1446,954.7 1454.3,949.9 1454.3,940.3" fill="#ec7f40" stroke="#fafafa" stroke-width="1.5" stroke-linejoin="round"/>
<path d="M1441.6 154.8H1450.4M1446 150.4V159.2" stroke="#fafafa" stroke-width="1.4"/>
<path d="M1390 121H1425.2a1.5 1.5 0 0 1 1.5 1.5V147.8L1434.2 154.8H1390a1.5 1.5 0 0 1 -1.5 -1.5V122.5a1.5 1.5 0 0 1 1.5 -1.5Z" fill="#686868"/>
<path d="M1396.5 911H1425.2a1.5 1.5 0 0 1 1.5 1.5V937.8L1434.2 944.8H1396.5a1.5 1.5 0 0 1 -1.5 -1.5V912.5a1.5 1.5 0 0 1 1.5 -1.5Z" fill="#686868"/>
<rect x="367.4" y="1004.8" width="748" height="8.3" rx="1.5" fill="#fafafa"/>
<rect x="369.4" y="1007" width="746" height="3.9" fill="#ec7f40"/>
<polygon points="1124.7,1008.9 1119.9,1000.6 1110.3,1000.6 1105.5,1008.9 1110.3,1017.2 1119.9,1017.2" fill="#ec7f40" stroke="#fafafa" stroke-width="1.5" stroke-linejoin="round"/>
<path d="M1135.5 990.1H1174.5a1.5 1.5 0 0 1 1.5 1.5V1007.25a1.5 1.5 0 0 1 -1.5 1.5H1127.4L1134 1002.4V991.6a1.5 1.5 0 0 1 1.5 -1.5Z" fill="#686868"/>
<g><path d="M1441.4 985V978.8a2.4 2.4 0 0 1 2.4 -2.4H1448.6a2.4 2.4 0 0 1 2.4 2.4V980.9" fill="none" stroke="#f26f1d" stroke-width="2.4"/><rect x="1438.4" y="984" width="15.2" height="9" rx="1.5" fill="#f26f1d"/><circle cx="1445.2" cy="988.5" r="1.5" fill="#808080"/><path d="M1445.6 987.3L1449 988.5L1445.6 989.7Z" fill="#808080"/></g>
<path d="M1446 999.1 L1448.7 1001.4 L1452.2 1001.7 L1452.5 1005.2 L1454.8 1007.9 L1452.5 1010.6 L1452.2 1014.1 L1448.7 1014.4 L1446 1016.7 L1443.3 1014.4 L1439.8 1014.1 L1439.5 1010.6 L1437.2 1007.9 L1439.5 1005.2 L1439.8 1001.7 L1443.3 1001.4Z" fill="#fafafa" stroke="#fafafa" stroke-width="1.2" stroke-linejoin="round"/><circle cx="1446" cy="1007.9" r="5.8" fill="#7d7d7d"/><circle cx="1446" cy="1007.9" r="4.6" fill="none" stroke="#e2632a" stroke-width="1"/><circle cx="1446" cy="1007.9" r="5.1" fill="none" stroke="#e2632a" stroke-width="1" stroke-dasharray="2 2"/>
</svg>
<span class="t" style="left:1392.5px;top:123.6px;line-height:14px;font-size:11.4px;color:#ececec;letter-spacing:-0.007px;">15.00</span>
<span class="t" style="left:1392.5px;top:138.6px;line-height:14px;font-size:11.4px;color:#ececec;letter-spacing:-0.258px;">(75)</span>
<span class="t" style="left:1400px;top:913.8px;line-height:14px;font-size:11.4px;color:#ececec;letter-spacing:-0.229px;">0.20</span>
<span class="t" style="left:1400px;top:928.6px;line-height:14px;font-size:11.4px;color:#ececec;letter-spacing:-0.716px;">(1)</span>
<span class="t" style="left:1139.4px;top:992.8px;line-height:14px;font-size:11.4px;color:#ececec;letter-spacing:-0.064px;">51186</span>
</div>
<div style="position:absolute;left:0;top:0;width:1899px;height:47px;background:#2c2c2c"></div>
<span class="t" style="left:816.6px;top:-4px;line-height:16px;font-size:13.6px;color:#ededed;font-weight:700;letter-spacing:-0.418px;">*Sans titre - PrusaSlicer-2.9.2 basé sur Slic3r</span>
<div style="position:absolute;left:1835px;top:5px;width:9px;height:1.4px;background:#e8e8e8"></div>
<svg style="position:absolute;left:1858px;top:0" width="41" height="14" viewBox="1858 0 41 14"><rect x="1862.6" y="0.2" width="7" height="7.2" fill="none" stroke="#ececec" stroke-width="1.2"/><path d="M1865 -1H1871.6V5.4" fill="none" stroke="#bdbdbd" stroke-width="0.9"/><circle cx="1898" cy="-0.2" r="12.1" fill="#219fdf"/><path d="M1892.2 -3.2L1901.2 5.8M1901.2 -3.2L1892.2 5.8" stroke="#fff" stroke-width="2"/></svg>
<span class="t" style="left:0.7px;top:26.1px;line-height:16px;font-size:13.3px;color:#f2f2f2;letter-spacing:-0.301px;">Fichier</span>
<span class="t" style="left:55.6px;top:26.1px;line-height:16px;font-size:13.3px;color:#f2f2f2;letter-spacing:-0.069px;">Editer</span>
<span class="t" style="left:106.2px;top:26.1px;line-height:16px;font-size:13.3px;color:#f2f2f2;letter-spacing:0.044px;">Fenêtre</span>
<span class="t" style="left:168.2px;top:26.1px;line-height:16px;font-size:13.3px;color:#f2f2f2;letter-spacing:-0.136px;">Vue</span>
<span class="t" style="left:207.6px;top:26.1px;line-height:16px;font-size:13.3px;color:#f2f2f2;letter-spacing:0.399px;">Configuration</span>
<span class="t" style="left:308px;top:26.1px;line-height:16px;font-size:13.3px;color:#f2f2f2;letter-spacing:0.127px;">Aide</span>
<div style="position:absolute;left:0;top:47px;width:1899px;height:42px;background:#393939"></div>
<div style="position:absolute;left:-4px;top:53px;width:87px;height:30.5px;background:#fafafa;border-radius:5px"></div>
<span class="t" style="left:17.5px;top:61.2px;line-height:16px;font-size:13.3px;color:#2a2a2a;letter-spacing:-0.035px;">Plateau</span>
<span class="t" style="left:108.2px;top:61.2px;line-height:16px;font-size:13.3px;color:#f2f2f2;letter-spacing:-0.039px;">Réglages d'Impression</span>
<span class="t" style="left:288.2px;top:61.2px;line-height:16px;font-size:13.3px;color:#f2f2f2;letter-spacing:-0.006px;">Filaments</span>
<span class="t" style="left:391.3px;top:61.2px;line-height:16px;font-size:13.3px;color:#f2f2f2;letter-spacing:0.133px;">Imprimantes</span>
<span class="t" style="left:511.3px;top:61.2px;line-height:16px;font-size:13.3px;color:#f2f2f2;letter-spacing:0.173px;">Printables</span>
<div style="position:absolute;left:1192px;top:56px;width:300px;height:24px;box-sizing:border-box;border:1px solid #666;background:#393939"></div>
<span class="t" style="left:1197px;top:61.2px;line-height:16px;font-size:13.3px;color:#efefef;letter-spacing:0.047px;">Entrer un terme de recherche</span>
<svg style="position:absolute;left:1469px;top:58px" width="22" height="20" viewBox="0 0 22 20"><circle cx="8.7" cy="8.2" r="5.3" fill="none" stroke="#ed6b21" stroke-width="1.3"/><path d="M13 12.3L17.6 16.4" stroke="#f4f4f4" stroke-width="2.6" stroke-linecap="round"/></svg>
<svg style="position:absolute;left:1648px;top:60px" width="16" height="16" viewBox="-8 -8 16 16"><polygon points="0,-6.6 5.7,-3.3 5.7,3.3 0,6.6 -5.7,3.3 -5.7,-3.3" fill="#e70000"/></svg>
<span class="t" style="left:1669.6px;top:61.2px;line-height:16px;font-size:13.3px;color:#f2f2f2;letter-spacing:0.247px;">Mode expert</span>
<svg style="position:absolute;left:1752.8px;top:64.8px" width="12" height="8" viewBox="0 0 12 8"><path d="M1 1.5L6 6L11 1.5" stroke="#707070" stroke-width="1.4" fill="none"/></svg>
<svg style="position:absolute;left:1787px;top:56px" width="24" height="24" viewBox="0 0 24 24"><circle cx="12" cy="12" r="10.6" fill="none" stroke="#f2f2f2" stroke-width="1.3"/><circle cx="12" cy="9.4" r="4.7" fill="none" stroke="#f2f2f2" stroke-width="1.3"/><path d="M4.6 19.6C6 16.2 8.6 14.6 12 14.6S18 16.2 19.4 19.6" fill="none" stroke="#f2f2f2" stroke-width="1.3"/></svg>
<span class="t" style="left:1816.5px;top:61.2px;line-height:16px;font-size:13.3px;color:#f2f2f2;letter-spacing:0.051px;">Connexion</span>
<svg style="position:absolute;left:1888.3px;top:64.8px" width="12" height="8" viewBox="0 0 12 8"><path d="M1 1.5L6 6L11 1.5" stroke="#707070" stroke-width="1.4" fill="none"/></svg>
<div style="position:absolute;left:1492px;top:89px;width:407px;height:934px;background:#404040"></div>
<span class="t" style="left:1497.5px;top:90.2px;line-height:16px;font-size:13.3px;color:#f0f0f0;letter-spacing:-0.054px;">Réglages d'impression:</span>
<div style="position:absolute;left:1497px;top:106px;width:379px;height:24px;box-sizing:border-box;border:1px solid #686868;background:#414141;"></div>
<span class="t" style="left:1548.6px;top:111.2px;line-height:16px;font-size:13.3px;color:#f0f0f0;letter-spacing:-0.493px;">0.20mm NORMAL @ELEGOO - PIECE MECA</span>
<span class="t" style="left:1497.5px;top:132.3px;line-height:16px;font-size:13.3px;color:#f0f0f0;">Filament:</span>
<div style="position:absolute;left:1497px;top:148px;width:379px;height:24px;box-sizing:border-box;border:1px solid #686868;background:#414141;"></div>
<span class="t" style="left:1548.6px;top:153.1px;line-height:16px;font-size:13.3px;color:#f0f0f0;letter-spacing:-0.54px;">Generic PETG @ELEGOO - Noir</span>
<span class="t" style="left:1497.5px;top:174.4px;line-height:16px;font-size:13.3px;color:#f0f0f0;letter-spacing:0.138px;">Imprimante:</span>
<div style="position:absolute;left:1497px;top:190px;width:379px;height:24px;box-sizing:border-box;border:1px solid #686868;background:#414141;"></div>
<span class="t" style="left:1548.6px;top:195.1px;line-height:16px;font-size:13.3px;color:#f0f0f0;letter-spacing:0.116px;">Elegoo Neptune-3 Plus</span>
<div style="position:absolute;left:1501px;top:152px;width:24px;height:16px;box-sizing:border-box;border:1px solid #f4f4f4;background:linear-gradient(90deg,#000 0,#000 15px,#f4f4f4 15px,#f4f4f4 16px,#fbe44d 16px)"></div>
<span class="t" style="left:1499.4px;top:224.9px;line-height:16px;font-size:13.3px;color:#f0f0f0;letter-spacing:0.097px;">Supports:</span>
<div style="position:absolute;left:1560px;top:220px;width:316px;height:24px;box-sizing:border-box;border:1px solid #686868;background:#414141;"></div>
<span class="t" style="left:1564.5px;top:224.9px;line-height:16px;font-size:13.3px;color:#f0f0f0;letter-spacing:0.453px;">Partout</span>
<span class="t" style="left:1499.4px;top:252.1px;line-height:16px;font-size:13.3px;color:#f0f0f0;letter-spacing:-0.288px;">Remplissage:</span>
<div style="position:absolute;left:1580px;top:247px;width:80px;height:24px;box-sizing:border-box;border:1px solid #686868;background:#414141;"></div>
<span class="t" style="left:1585px;top:252.1px;line-height:16px;font-size:13.3px;color:#f0f0f0;letter-spacing:0.34px;">40%</span>
<span class="t" style="left:1681.4px;top:252.1px;line-height:16px;font-size:13.3px;color:#f0f0f0;letter-spacing:0.255px;">Bordure:</span>
<div style="position:absolute;left:1740px;top:252.7px;width:14px;height:13.5px;box-sizing:border-box;border:1px solid #626262;background:#3d3d3d;"></div>
<div style="position:absolute;left:1497px;top:277px;width:410px;height:566.5px;box-sizing:border-box;border:1px solid #343434;background:#404040;"></div>
<div style="position:absolute;left:1498px;top:278px;width:401px;height:28px;background:#393939;border-bottom:1px solid #2f2f2f"></div>
<div style="position:absolute;left:1697.5px;top:278px;width:1px;height:28.5px;background:#2c2c2c"></div>
<div style="position:absolute;left:1727px;top:278px;width:1px;height:28.5px;background:#2c2c2c"></div>
<span class="t" style="left:1505.7px;top:285.2px;line-height:16px;font-size:13.3px;color:#f0f0f0;font-weight:700;letter-spacing:-0.427px;">Nom</span>
<span class="t" style="left:1794.6px;top:285.2px;line-height:16px;font-size:13.3px;color:#f0f0f0;font-weight:700;letter-spacing:0.006px;">Édition</span>
<span class="t" style="left:1518px;top:309.2px;line-height:16px;font-size:13.3px;color:#f0f0f0;letter-spacing:0.242px;">supportEcran-Body.stl</span>
<svg style="position:absolute;left:1492px;top:89px" width="407" height="934" viewBox="1492 89 407 934">
<path d="M1513 110.9 L1515.2 112.7 L1518 113 L1518.3 115.8 L1520.1 118 L1518.3 120.2 L1518 123 L1515.2 123.3 L1513 125.1 L1510.8 123.3 L1508 123 L1507.7 120.2 L1505.9 118 L1507.7 115.8 L1508 113 L1510.8 112.7Z" fill="#fafafa" stroke="#fafafa" stroke-width="1" stroke-linejoin="round"/><circle cx="1513" cy="118" r="4.5" fill="#404040"/><circle cx="1513" cy="118" r="3.1" fill="none" stroke="#ed6b21" stroke-width="1.2"/><circle cx="1513" cy="118" r="3.6" fill="none" stroke="#ed6b21" stroke-width="1.2" stroke-dasharray="1.4 1.4"/>
<path d="M1889 110.6 L1891.3 112.5 L1894.2 112.8 L1894.5 115.7 L1896.4 118 L1894.5 120.3 L1894.2 123.2 L1891.3 123.5 L1889 125.4 L1886.7 123.5 L1883.8 123.2 L1883.5 120.3 L1881.6 118 L1883.5 115.7 L1883.8 112.8 L1886.7 112.5Z" fill="#fafafa" stroke="#fafafa" stroke-width="1" stroke-linejoin="round"/><circle cx="1889" cy="118" r="4.7" fill="#404040"/><circle cx="1889" cy="118" r="3.2" fill="none" stroke="#ed6b21" stroke-width="1.2"/><circle cx="1889" cy="118" r="3.7" fill="none" stroke="#ed6b21" stroke-width="1.2" stroke-dasharray="1.5 1.5"/>
<path d="M1889 152.6 L1891.3 154.5 L1894.2 154.8 L1894.5 157.7 L1896.4 160 L1894.5 162.3 L1894.2 165.2 L1891.3 165.5 L1889 167.4 L1886.7 165.5 L1883.8 165.2 L1883.5 162.3 L1881.6 160 L1883.5 157.7 L1883.8 154.8 L1886.7 154.5Z" fill="#fafafa" stroke="#fafafa" stroke-width="1" stroke-linejoin="round"/><circle cx="1889" cy="160" r="4.7" fill="#404040"/><circle cx="1889" cy="160" r="3.2" fill="none" stroke="#ed6b21" stroke-width="1.2"/><circle cx="1889" cy="160" r="3.7" fill="none" stroke="#ed6b21" stroke-width="1.2" stroke-dasharray="1.5 1.5"/>
<path d="M1889 194.6 L1891.3 196.5 L1894.2 196.8 L1894.5 199.7 L1896.4 202 L1894.5 204.3 L1894.2 207.2 L1891.3 207.5 L1889 209.4 L1886.7 207.5 L1883.8 207.2 L1883.5 204.3 L1881.6 202 L1883.5 199.7 L1883.8 196.8 L1886.7 196.5Z" fill="#fafafa" stroke="#fafafa" stroke-width="1" stroke-linejoin="round"/><circle cx="1889" cy="202" r="4.7" fill="#404040"/><circle cx="1889" cy="202" r="3.2" fill="none" stroke="#ed6b21" stroke-width="1.2"/><circle cx="1889" cy="202" r="3.7" fill="none" stroke="#ed6b21" stroke-width="1.2" stroke-dasharray="1.5 1.5"/>
<path d="M1858 115.5L1863.5 120.5L1869 115.5" stroke="#6a6a6a" stroke-width="1.3" fill="none"/>
<path d="M1858 157.5L1863.5 162.5L1869 157.5" stroke="#6a6a6a" stroke-width="1.3" fill="none"/>
<path d="M1858 199.5L1863.5 204.5L1869 199.5" stroke="#6a6a6a" stroke-width="1.3" fill="none"/>
<path d="M1858 229.5L1863.5 234.5L1869 229.5" stroke="#6a6a6a" stroke-width="1.3" fill="none"/>
<path d="M1642 256.7L1647.5 261.7L1653 256.7" stroke="#6a6a6a" stroke-width="1.3" fill="none"/>
<rect x="1506.6" y="195.7" width="13" height="12.6" fill="none" stroke="#f4f4f4" stroke-width="1.3"/><path d="M1506.6 200.3H1519.6" stroke="#f4f4f4" stroke-width="1.2"/><rect x="1507.9" y="198.2" width="4.5" height="4.5" fill="#ed6b21"/>
<path d="M1531.6 202V199.3a3.5 3.5 0 0 1 7 0V202" fill="none" stroke="#f4f4f4" stroke-width="1.7"/><rect x="1529.2" y="201.4" width="11.8" height="7.6" rx="1" fill="#f4f4f4"/><path d="M1533.6 204L1537.6 205.3L1533.6 206.6Z" fill="#404040"/>
<path d="M1706 316.2Q1713 308.6 1720 316.2Q1713 323.8 1706 316.2Z" fill="none" stroke="#f6f6f6" stroke-width="1.6" stroke-linejoin="round"/><circle cx="1713" cy="316.1" r="2.5" fill="none" stroke="#f6f6f6" stroke-width="1.7"/>
<path d="M1816.5 313.6H1811a1 1 0 0 0 -1 1V321.7a1 1 0 0 0 1 1H1818.9a1 1 0 0 0 1 -1V317" fill="none" stroke="#f6f6f6" stroke-width="1.4"/><circle cx="1819.7" cy="313.6" r="2.3" fill="#404040" stroke="#ed6b21" stroke-width="1.3"/>
</svg>
<div style="position:absolute;left:1497px;top:857.5px;width:410px;height:123px;box-sizing:border-box;border:1px solid #333"></div>
<div style="position:absolute;left:1495px;top:849px;width:176px;height:16px;background:#404040"></div>
<span class="t" style="left:1497.5px;top:850.2px;line-height:16px;font-size:13.3px;color:#f0f0f0;font-weight:700;letter-spacing:-0.086px;">Informations de découpage</span>
<span class="t" style="left:1497.5px;top:866.2px;line-height:16px;font-size:13.3px;color:#f0f0f0;letter-spacing:-0.035px;">Filament Utilisé (g)</span>
<span class="t" style="left:1676.5px;top:866.2px;line-height:16px;font-size:13.3px;color:#f0f0f0;letter-spacing:0.079px;">19,94</span>
<span class="t" style="left:1497.5px;top:887.2px;line-height:16px;font-size:13.3px;color:#f0f0f0;letter-spacing:-0.055px;">Filament Utilisé (m)</span>
<span class="t" style="left:1676.5px;top:887.2px;line-height:16px;font-size:13.3px;color:#f0f0f0;letter-spacing:0.038px;">6,53</span>
<span class="t" style="left:1497.5px;top:908.2px;line-height:16px;font-size:13.3px;color:#f0f0f0;letter-spacing:-0.036px;">Filament Utilisé (mm³)</span>
<span class="t" style="left:1676.5px;top:908.2px;line-height:16px;font-size:13.3px;color:#f0f0f0;letter-spacing:0.361px;">15700,50</span>
<span class="t" style="left:1497.5px;top:929.2px;line-height:16px;font-size:13.3px;color:#f0f0f0;letter-spacing:0.202px;">Coût</span>
<span class="t" style="left:1676.5px;top:929.2px;line-height:16px;font-size:13.3px;color:#f0f0f0;letter-spacing:0.038px;">0,40</span>
<span class="t" style="left:1497.5px;top:950.1px;line-height:16px;font-size:13.3px;color:#f0f0f0;letter-spacing:-0.043px;">Temps d'impression estimé:</span>
<span class="t" style="left:1506.3px;top:966.1px;line-height:16px;font-size:13.3px;color:#f0f0f0;letter-spacing:0.046px;">- mode normal</span>
<span class="t" style="left:1676.5px;top:966.1px;line-height:16px;font-size:13.3px;color:#f0f0f0;letter-spacing:0.508px;">1h25m</span>
<div style="position:absolute;left:1497px;top:986.5px;width:410px;height:34.5px;box-sizing:border-box;border:1px solid #303030;background:#404040;border-radius:4px;"></div>
<span class="t" style="left:1642.4px;top:997.1px;line-height:16px;font-size:13.3px;color:#f0f0f0;font-weight:700;letter-spacing:-0.011px;">Exporter le G-code</span>
</body></html>
